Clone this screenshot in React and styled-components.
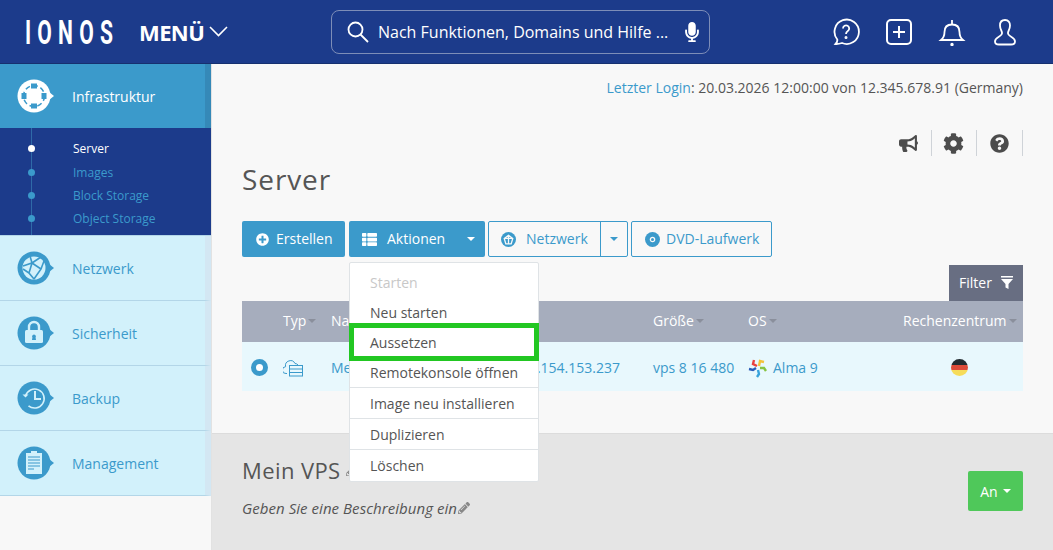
import React from "react";
import styled, { createGlobalStyle } from "styled-components";
import { FaBullhorn, FaCog, FaQuestionCircle, FaPlusCircle, FaThList, FaMicrophone, FaPencilAlt } from "react-icons/fa";

const Global = createGlobalStyle`
  html, body { margin: 0; padding: 0; height: 100%; overflow: hidden; }
  body { font-family: "Open Sans", "Liberation Sans", sans-serif; background: #f8f8f8; color: #555; }
  * { box-sizing: border-box; }
`;

const Page = styled.div`
  width: 1053px;
  height: 550px;
  display: flex;
  flex-direction: column;
  overflow: hidden;
`;

/* top bar */
const Header = styled.header`
  height: 64px;
  flex: none;
  background: #1c3b8b;
  border-bottom: 1px solid #16306f;
  display: flex;
  align-items: center;
  color: #fff;
  padding-left: 25px;
`;

const Logo = styled.div`
  width: 88px;
  height: 32px;
  flex: none;
  overflow: visible;
  font-family: "Roboto", sans-serif;
  font-size: 34px;
  line-height: 32px;
  font-weight: 700;
  letter-spacing: 10px;
  white-space: nowrap;
  transform-origin: left center;
  transform: scaleX(0.62);
`;

const MenuToggle = styled.div`
  margin-left: 26px;
  width: 192px;
  flex: none;
  display: flex;
  align-items: center;
  gap: 5px;
  font-size: 22px;
  font-weight: 700;
  letter-spacing: -0.6px;
`;

const SearchBox = styled.div`
  width: 379px;
  height: 44px;
  flex: none;
  border: 1px solid #7d8db8;
  border-radius: 8px;
  display: flex;
  align-items: center;
  padding: 0 7px 0 14px;
  font-size: 16px;
  letter-spacing: 0;
  gap: 8px;
`;

const SearchText = styled.span`
  flex: 1;
  white-space: nowrap;
`;

const HeaderIcons = styled.div`
  margin-left: 122px;
  display: flex;
  align-items: center;
  gap: 25px;
`;

const Body = styled.div`
  flex: 1;
  display: flex;
  min-height: 0;
`;

/* left navigation */
const Sidebar = styled.aside`
  width: 212px;
  flex: none;
  border-right: 1px solid #e2e2e2;
  background: #f8f8f8;
`;

const NavItem = styled.div`
  height: ${(p) => (p.$active ? "64px" : "65px")};
  display: flex;
  align-items: center;
  padding-left: 17px;
  gap: 17px;
  font-size: 14px;
  color: ${(p) => (p.$active ? "#fff" : "#3b9acb")};
  background: ${(p) => (p.$active ? "#3b9acb" : "#d2f1fb")};
  border-right: 6px solid ${(p) => (p.$active ? "#3589b8" : "#d3e7f3")};
  border-bottom: ${(p) => (p.$active ? "none" : "1px solid #b3d6e8")};
  position: relative;

  ${(p) =>
    p.$active &&
    `&::after {
      content: "";
      position: absolute;
      left: 25px;
      bottom: -7px;
      border-left: 6px solid transparent;
      border-right: 6px solid transparent;
      border-top: 7px solid #3b9acb;
    }`}
`;

const SubNav = styled.div`
  height: 108px;
  background: #1c3b8b;
  border-bottom: 1px solid #b3d6e8;
  padding-top: 9px;
  position: relative;

  &::before {
    content: "";
    position: absolute;
    left: 31px;
    top: 0;
    bottom: 0;
    width: 1px;
    background: #2f6aa8;
  }
`;

const SubItem = styled.div`
  height: 23.4px;
  display: flex;
  align-items: center;
  padding-left: 28px;
  font-size: 12px;
  color: ${(p) => (p.$active ? "#fff" : "#3b9acb")};
  position: relative;
`;

const SubDot = styled.span`
  width: 7px;
  height: 7px;
  border-radius: 50%;
  background: ${(p) => (p.$active ? "#fff" : "#3b9acb")};
  margin-right: 38px;
  position: relative;
`;

/* main area */
const Main = styled.main`
  flex: 1;
  min-width: 0;
  display: flex;
  flex-direction: column;
`;

const TopPanel = styled.section`
  height: 370px;
  flex: none;
  padding: 14px 30px 0 30px;
  border-bottom: 1px solid #dcdcdc;
  position: relative;
`;

const LoginLine = styled.div`
  text-align: right;
  font-size: 14px;
  line-height: 20px;
  color: #555;
`;

const LoginLabel = styled.span`
  color: #3b9acb;
`;

const ToolIcons = styled.div`
  margin-top: 32px;
  height: 26px;
  display: flex;
  justify-content: flex-end;
`;

const ToolIcon = styled.div`
  width: 46px;
  margin-left: -1px;
  display: flex;
  align-items: center;
  justify-content: center;
  color: #4c4c4c;
  font-size: ${(p) => p.$size || 19}px;
  border-right: 1px solid #cfd3d8;
  &:first-child { width: 33px; justify-content: flex-start; }
  &:last-child { width: 47px; }
`;

const Title = styled.h1`
  margin: 5px 0 0 0;
  font-size: 28px;
  line-height: 36px;
  font-weight: 400;
  letter-spacing: 0.9px;
  color: #555;
`;

const ButtonRow = styled.div`
  margin-top: 24px;
  display: flex;
  gap: 4px;
  height: 36px;
  position: relative;
  line-height: 34px;
`;

const SolidButton = styled.div`
  background: #3b9acb;
  color: #fff;
  border-radius: 2px;
  font-size: 14px;
  display: flex;
  align-items: center;
  width: ${(p) => p.$width}px;
  padding-left: ${(p) => p.$pad}px;
  gap: ${(p) => p.$gap}px;
`;

const Caret = styled.span`
  border-left: 4px solid transparent;
  border-right: 4px solid transparent;
  border-top: 4px solid ${(p) => p.$color || "#fff"};
  display: inline-block;
`;

const ActionCaret = styled(Caret)`
  margin-left: auto;
  margin-right: 10px;
`;

const OutlineGroup = styled.div`
  display: flex;
  border: 1px solid #3b9acb;
  border-radius: 2px;
  color: #3b9acb;
  font-size: 14px;
  background: #f8f8f8;
  margin-left: ${(p) => p.$left}px;
`;

const OutlinePart = styled.div`
  display: flex;
  align-items: center;
  gap: ${(p) => p.$gap || 10}px;
  width: ${(p) => p.$width}px;
  padding-left: ${(p) => p.$pad}px;
  & + & { border-left: 1px solid #3b9acb; }
`;

const FilterRow = styled.div`
  margin-top: 8px;
  display: flex;
  justify-content: flex-end;
`;

const FilterTab = styled.div`
  width: 74px;
  height: 36px;
  padding-bottom: 2px;
  background: #686e82;
  color: #fff;
  font-size: 14px;
  display: flex;
  align-items: center;
  justify-content: center;
  gap: 9px;
`;

const ServerTable = styled.div`
  display: flex;
  flex-direction: column;
`;

const HeadRow = styled.div`
  height: 41px;
  padding-bottom: 2px;
  background: #a6adbd;
  color: #fff;
  font-size: 14px;
  display: grid;
  grid-template-columns: 41px 48px 322px 95px 155px 1fr;
  align-items: center;
`;

const DataRow = styled.div`
  height: 49px;
  padding-top: 2px;
  background: #e8f8fd;
  color: #3b9acb;
  font-size: 14px;
  display: grid;
  grid-template-columns: 41px 48px 322px 95px 155px 1fr;
  align-items: center;
`;

const HeadCell = styled.div`
  display: flex;
  align-items: center;
  gap: 2px;
  white-space: nowrap;
  justify-content: ${(p) => (p.$end ? "flex-end" : "flex-start")};
  padding-right: ${(p) => (p.$end ? "7px" : "0")};
`;

const RadioCell = styled.div`
  padding-left: 9px;
`;

const Radio = styled.span`
  display: block;
  width: 17px;
  height: 17px;
  border-radius: 50%;
  background: #fff;
  border: 5px solid #3b9acb;
`;

const NameCell = styled.div`
  display: flex;
  justify-content: space-between;
  padding-right: 33px;
  white-space: nowrap;
`;

const OsCell = styled.div`
  display: flex;
  align-items: center;
  gap: 5px;
`;

const FlagCell = styled.div`
  display: flex;
  justify-content: flex-end;
  padding-right: 55px;
`;

const Flag = styled.span`
  width: 17px;
  height: 17px;
  border-radius: 50%;
  background: linear-gradient(#222b30 0 33%, #dd4b39 33% 66%, #f6dc5a 66%);
`;

/* dropdown over the table */
const Dropdown = styled.div`
  position: absolute;
  left: 107px;
  top: 41px;
  width: 190px;
  background: #fff;
  border: 1px solid #dfe3e6;
  border-radius: 2px;
  font-size: 14px;
  line-height: normal;
  color: #555;
  z-index: 5;
  padding-top: 5px;
`;

const DropItem = styled.div`
  height: ${(p) => p.$h || 31}px;
  display: flex;
  align-items: center;
  padding-left: 20px;
  white-space: nowrap;
  color: ${(p) => (p.$muted ? "#c8c8c8" : "#555")};
  border-bottom: ${(p) => (p.$line ? "1px solid #dfe3e6" : "none")};
  position: relative;

  ${(p) =>
    p.$marked &&
    `&::after {
      content: "";
      position: absolute;
      left: -1px;
      right: -1px;
      top: -4px;
      bottom: -4px;
      border: 5px solid #22c722;
    }`}
`;

/* detail panel */
const DetailPanel = styled.section`
  flex: 1;
  background: #e5e5e5;
  padding: 21px 30px 0;
  position: relative;
`;

const DetailTitle = styled.h2`
  margin: 0;
  font-size: 22px;
  line-height: 30px;
  font-weight: 400;
  letter-spacing: 0.4px;
  color: #555;
  display: flex;
  align-items: center;
  gap: 5px;
`;

const DetailText = styled.div`
  margin-top: 13px;
  font-size: 15px;
  letter-spacing: 0.05px;
  font-style: italic;
  color: #555;
  display: flex;
  align-items: center;
  gap: 1px;
`;

const StatusButton = styled.div`
  position: absolute;
  right: 30px;
  top: 37px;
  width: 55px;
  height: 40px;
  background: #4fc85a;
  color: #fff;
  border-radius: 2px;
  font-size: 14px;
  display: flex;
  align-items: center;
  justify-content: center;
  gap: 5px;
`;

/* drawings */
const NavBadge = ({ children }) => (
  <svg width="38" height="34" viewBox="0 0 38 34">
    <circle cx="17" cy="17" r="16.5" fill="currentColor" />
    <path d="M32 13l5 4-5 4z" fill="currentColor" />
    {children}
  </svg>
);

const InfraIcon = () => (
  <svg width="38" height="34" viewBox="0 0 38 34">
    <circle cx="17" cy="17" r="16.5" fill="#fff" />
    <path d="M32 13l5 4-5 4z" fill="#fff" />
    <circle cx="17" cy="17" r="10.500" fill="none" stroke="#3b9acb" strokeWidth="1.500" strokeDasharray="5 3" />
    <path d="M14 4.500h6v5h-6zM14 24.500h6v5h-6zM4.500 14h5v6h-5zM24.500 14h5v6h-5z" fill="#3b9acb" />
  </svg>
);

const NetIcon = () => (
  <NavBadge>
    <circle cx="17" cy="17" r="11.500" fill="#d2f1fb" />
    <path d="M6 15l9-3 9 6-7 10M15 12l-2-7M15 12l-3 10 5 6M24 18l3-8M12 22l-6-4M15 12l9-6" fill="none" stroke="#3b9acb" strokeWidth="1.600" />
  </NavBadge>
);

const LockIcon = () => (
  <NavBadge>
    <path d="M12 14v-3a5 5 0 0 1 10 0v3" fill="none" stroke="#d2f1fb" strokeWidth="2.400" />
    <rect x="8" y="14" width="18" height="13" rx="1.500" fill="#d2f1fb" />
    <path d="M15.400 21.500a1.900 1.900 0 1 1 3.200 0l.4 2.500h-4z" fill="#3b9acb" />
  </NavBadge>
);

const BackupIcon = () => (
  <NavBadge>
    <path d="M8.500 15a9.500 9.500 0 1 1 3 9.800" fill="none" stroke="#d2f1fb" strokeWidth="1.600" />
    <path d="M5.500 13.500l3 3 3-3z" fill="#d2f1fb" />
    <path d="M18 10v8h6" fill="none" stroke="#d2f1fb" strokeWidth="2" />
  </NavBadge>
);

const ClipboardIcon = () => (
  <NavBadge>
    <rect x="9" y="7" width="16" height="21" fill="#d2f1fb" />
    <rect x="14" y="5" width="6" height="3" fill="#d2f1fb" />
    <path d="M11 11h12M11 14h12M11 17h12M11 20h12M11 23h6" stroke="#3b9acb" strokeWidth="1.200" />
  </NavBadge>
);

const CloudServerIcon = () => (
  <svg width="22" height="18" viewBox="1 0 22 18" fill="none" stroke="#3b9acb" strokeWidth="1">
    <path d="M5 14.500H4a3.400 3.400 0 0 1-.4-6.800A5 5 0 0 1 13 4.500a4 4 0 0 1 3 1.500" />
    <rect x="7.500" y="6.500" width="13" height="10.500" fill="#e8f8fd" />
    <path d="M7.500 10h13M7.500 13.500h13" />
  </svg>
);

const DiscIcon = ({ inner }) => (
  <svg width="15" height="15" viewBox="0 0 14 14">
    <circle cx="7" cy="7" r="7" fill="#3b9acb" />
    {inner ? (
      <circle cx="7" cy="7" r="2" fill="none" stroke="#f8f8f8" strokeWidth="1.200" />
    ) : (
      <path d="M3 6l4-3 4 3-1.500 5h-5zM7 3v8M3 6l8 0" fill="none" stroke="#f8f8f8" strokeWidth="1.200" />
    )}
  </svg>
);

const AlmaIcon = () => (
  <svg width="20" height="20" viewBox="0 0 20 20" fill="none" strokeWidth="2.400">
    <path d="M9 8L5 6l1-4" stroke="#e8403f" />
    <path d="M11 8l1-5 4 1" stroke="#f3c23b" />
    <path d="M12 10l4 0 2 3" stroke="#86c441" />
    <path d="M10 12l1 4-2 3" stroke="#38a3dc" />
    <path d="M8 10l-3 2-4-1" stroke="#2a5bb8" />
  </svg>
);

const FilterGlyph = () => (
  <svg width="12" height="13" viewBox="0 0 12 13" fill="#fff">
    <rect x="0" y="0" width="12" height="1.500" />
    <path d="M0 3h12L7.500 8v5l-3-1.500V8z" />
  </svg>
);

const HelpBubble = () => (
  <svg width="28" height="28" viewBox="0 0 28 28" fill="none" stroke="#fff" strokeWidth="1.800">
    <path d="M3.500 26c1.500-1.500 2-3 1.800-4.500A12.200 12.200 0 1 1 10 25c-2.500.8-4.500 1.300-6.500 1z" />
    <path d="M11 10.500a3.100 3.100 0 1 1 4.800 2.600c-1.200.8-1.800 1.300-1.800 2.900" />
    <circle cx="14" cy="19.500" r="0.600" fill="#fff" />
  </svg>
);

const PlusBox = () => (
  <svg width="28" height="28" viewBox="0 0 28 28" fill="none" stroke="#fff" strokeWidth="2">
    <rect x="2" y="2" width="24" height="24" rx="4" />
    <path d="M14 8v12M8 14h12" />
  </svg>
);

const Bell = () => (
  <svg width="28" height="28" viewBox="0 0 28 28" fill="none" stroke="#fff" strokeWidth="1.800">
    <path d="M3 22c2.500-2 3.500-4 3.500-8 0-5 3-7.500 7.500-7.500s7.500 2.500 7.500 7.500c0 4 1 6 3.500 8z" />
    <path d="M14 6.500V2" />
    <circle cx="14" cy="26.500" r="0.800" fill="#fff" />
  </svg>
);

const UserIcon = () => (
  <svg width="28" height="28" viewBox="0 0 28 28" fill="none" stroke="#fff" strokeWidth="1.800">
    <path d="M14 2c-3.500 0-5 2.500-5 5.500 0 3 1.500 5 2 7 .4 2-1 3-3.500 4.500C5 20.500 4 22 4 23.500 4 25.500 6 26.500 8 26.500h12c2 0 4-1 4-3 0-1.500-1-3-3.500-4.500-2.500-1.500-3.900-2.500-3.500-4.500.5-2 2-4 2-7C19 4.500 17.500 2 14 2z" />
  </svg>
);

const SearchGlass = () => (
  <svg width="24" height="24" viewBox="0 0 24 24" fill="none" stroke="#fff" strokeWidth="1.800">
    <circle cx="9.500" cy="9.500" r="7" />
    <path d="M14.500 14.500L22 22" />
  </svg>
);

const Chevron = () => (
  <svg width="19" height="11" viewBox="0 0 19 11" fill="none" stroke="#fff" strokeWidth="1.600">
    <path d="M1 1l8.500 8.500L18 1" />
  </svg>
);

const navItems = [
  { label: "Netzwerk", icon: <NetIcon /> },
  { label: "Sicherheit", icon: <LockIcon /> },
  { label: "Backup", icon: <BackupIcon /> },
  { label: "Management", icon: <ClipboardIcon /> },
];

const subItems = ["Server", "Images", "Block Storage", "Object Storage"];

const menuItems = [
  { label: "Starten", muted: true, h: 29 },
  { label: "Neu starten", h: 30 },
  { label: "Aussetzen", marked: true, h: 30 },
  { label: "Remotekonsole öffnen", line: true, h: 31 },
  { label: "Image neu installieren", line: true },
  { label: "Duplizieren", line: true },
  { label: "Löschen" },
];

const App = () => (
  <Page>
    <Global />
    <Header>
      <Logo>IONOS</Logo>
      <MenuToggle>
        MENÜ <Chevron />
      </MenuToggle>
      <SearchBox>
        <SearchGlass />
        <SearchText>Nach Funktionen, Domains und Hilfe ...</SearchText>
        <FaMicrophone size={20} />
      </SearchBox>
      <HeaderIcons>
        <HelpBubble />
        <PlusBox />
        <Bell />
        <UserIcon />
      </HeaderIcons>
    </Header>
    <Body>
      <Sidebar>
        <NavItem $active>
          <InfraIcon />
          Infrastruktur
        </NavItem>
        <SubNav>
          {subItems.map((s, i) => (
            <SubItem key={s} $active={i === 0}>
              <SubDot $active={i === 0} />
              {s}
            </SubItem>
          ))}
        </SubNav>
        {navItems.map((n) => (
          <NavItem key={n.label}>
            {n.icon}
            {n.label}
          </NavItem>
        ))}
      </Sidebar>
      <Main>
        <TopPanel>
          <LoginLine>
            <LoginLabel>Letzter Login</LoginLabel>: 20.03.2026 12:00:00 von 12.345.678.91 (Germany)
          </LoginLine>
          <ToolIcons>
            <ToolIcon>
              <FaBullhorn />
            </ToolIcon>
            <ToolIcon $size={21}>
              <FaCog />
            </ToolIcon>
            <ToolIcon>
              <FaQuestionCircle />
            </ToolIcon>
          </ToolIcons>
          <Title>Server</Title>
          <ButtonRow>
            <SolidButton $width={103} $pad={14} $gap={7}>
              <FaPlusCircle size={13} />
              Erstellen
            </SolidButton>
            <SolidButton $width={136} $pad={13} $gap={10}>
              <FaThList size={15} />
              Aktionen
              <ActionCaret />
            </SolidButton>
            <OutlineGroup $left={-1}>
              <OutlinePart $width={111} $pad={12} $gap={10}>
                <DiscIcon />
                Netzwerk
              </OutlinePart>
              <OutlinePart $width={27} $pad={9}>
                <Caret $color="#3b9acb" />
              </OutlinePart>
            </OutlineGroup>
            <OutlineGroup $left={-1}>
              <OutlinePart $width={139} $pad={13} $gap={6}>
                <DiscIcon inner />
                DVD-Laufwerk
              </OutlinePart>
            </OutlineGroup>
            <Dropdown>
              {menuItems.map((m) => (
                <DropItem key={m.label} $muted={m.muted} $marked={m.marked} $line={m.line} $h={m.h}>
                  {m.label}
                </DropItem>
              ))}
            </Dropdown>
          </ButtonRow>
          <FilterRow>
            <FilterTab>
              Filter <FilterGlyph />
            </FilterTab>
          </FilterRow>
          <ServerTable>
            <HeadRow>
              <span />
              <HeadCell>
                Typ <Caret $color="#8a8f9c" />
              </HeadCell>
              <HeadCell>Name</HeadCell>
              <HeadCell>
                Größe <Caret $color="#8a8f9c" />
              </HeadCell>
              <HeadCell>
                OS <Caret $color="#8a8f9c" />
              </HeadCell>
              <HeadCell $end>
                Rechenzentrum <Caret $color="#8a8f9c" />
              </HeadCell>
            </HeadRow>
            <DataRow>
              <RadioCell>
                <Radio />
              </RadioCell>
              <CloudServerIcon />
              <NameCell>
                <span>Mein VPS</span>
                <span>85.154.153.237</span>
              </NameCell>
              <span>vps 8 16 480</span>
              <OsCell>
                <AlmaIcon />
                Alma 9
              </OsCell>
              <FlagCell>
                <Flag />
              </FlagCell>
            </DataRow>
          </ServerTable>
        </TopPanel>
        <DetailPanel>
          <DetailTitle>
            Mein VPS
            <FaPencilAlt size={11} color="#888" />
          </DetailTitle>
          <DetailText>
            Geben Sie eine Beschreibung ein
            <FaPencilAlt size={12} color="#888" />
          </DetailText>
          <StatusButton>
            An <Caret />
          </StatusButton>
        </DetailPanel>
      </Main>
    </Body>
  </Page>
);

export default App;
